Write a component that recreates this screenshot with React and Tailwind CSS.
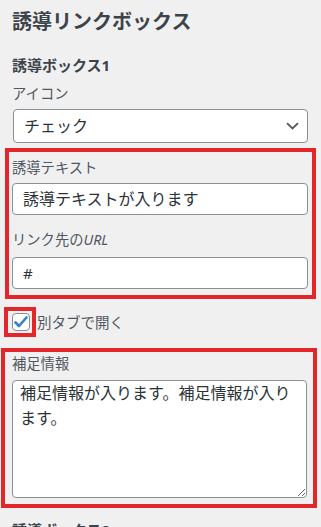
import React from "react";

const font = "font-['Noto_Sans','Noto_Sans_CJK_JP',sans-serif]";

const Chevron = () => (
  <svg width="13" height="8" viewBox="0 0 13 8" fill="none">
    <path d="M1 1.2l5.5 5.3 5.5-5.3" stroke="#50575e" strokeWidth="1.8" />
  </svg>
);

const Check = () => (
  <svg width="14" height="12" viewBox="0 0 14 12" fill="none">
    <path d="M1.5 6.5l3.5 3.5 7.5-8.5" stroke="#3582c4" strokeWidth="2.6" strokeLinecap="round" strokeLinejoin="round" />
  </svg>
);

const App = () => {
  return (
    <div className={`${font} bg-[#f0f0f1] w-[321px] h-[527px] overflow-hidden pl-[12px] pr-[13px] pt-[10px] text-[#50575e]`}>
      <h2 className="text-[20px] leading-[24px] font-bold text-[#3c434a]">誘導リンクボックス</h2>

      <h3 className="mt-[21px] text-[15px] leading-[20px] font-bold text-[#3c434a]">誘導ボックス1</h3>

      <div className="mt-[9px] text-[14.3px] leading-[20px]">アイコン</div>
      <div className="mt-[5px] ml-px h-[34px] flex items-center justify-between bg-white border border-[#8c8f94] rounded-[4px] pl-[10px] pr-[8px]">
        <span className="text-[16px] text-[#2c3338]">チェック</span>
        <Chevron />
      </div>

      {/* 誘導テキスト + URL */}
      <div className="mt-[5px] -ml-[7px] -mr-[8px] border-4 border-[#e3262a] pl-[3px] pr-[4px] pt-[6px] pb-[6px]">
        <div className="text-[14.3px] leading-[20px]">誘導テキスト</div>
        <div className="mt-[5px] h-[32px] flex items-center bg-white border border-[#8c8f94] rounded-[4px] pl-[10px] text-[16px] text-[#2c3338]">
          誘導テキストが入ります
        </div>
        <div className="mt-[15px] text-[14.3px] leading-[20px]">
          リンク先の<i>URL</i>
        </div>
        <div className="mt-[7px] h-[32px] flex items-center bg-white border border-[#8c8f94] rounded-[4px] pl-[10px] text-[15px] text-[#2c3338]">
          #
        </div>
      </div>

      <div className="mt-[8px] flex items-center">
        <div className="-ml-[8px] w-[32px] h-[30px] border-4 border-[#e3262a] pl-[4px] pt-[2px]">
          <div className="w-[18px] h-[18px] bg-white border border-[#8c8f94] rounded-[4px] flex items-center justify-center">
            <Check />
          </div>
        </div>
        <span className="ml-px text-[14.5px] leading-[20px]">別タブで開く</span>
      </div>

      {/* 補足情報 */}
      <div className="mt-[11px] -ml-[11px] -mr-[9px] border-4 border-[#e3262a] pl-[7px] pr-[6px] pt-[2px] pb-[6px]">
        <div className="text-[14.3px] leading-[20px]">補足情報</div>
        <textarea
          readOnly
          defaultValue="補足情報が入ります。補足情報が入ります。"
          className={`${font} mt-[6px] block w-full h-[118px] bg-white border border-[#8c8f94] rounded-[4px] pl-[7px] pr-[7px] pt-0 text-[16px] leading-[25px] text-[#2c3338] resize-y outline-none`}
        />
      </div>

      <h3 className="mt-[12px] text-[15px] leading-[20px] font-bold text-[#3c434a]">誘導ボックス2</h3>
    </div>
  );
};

export default App;
